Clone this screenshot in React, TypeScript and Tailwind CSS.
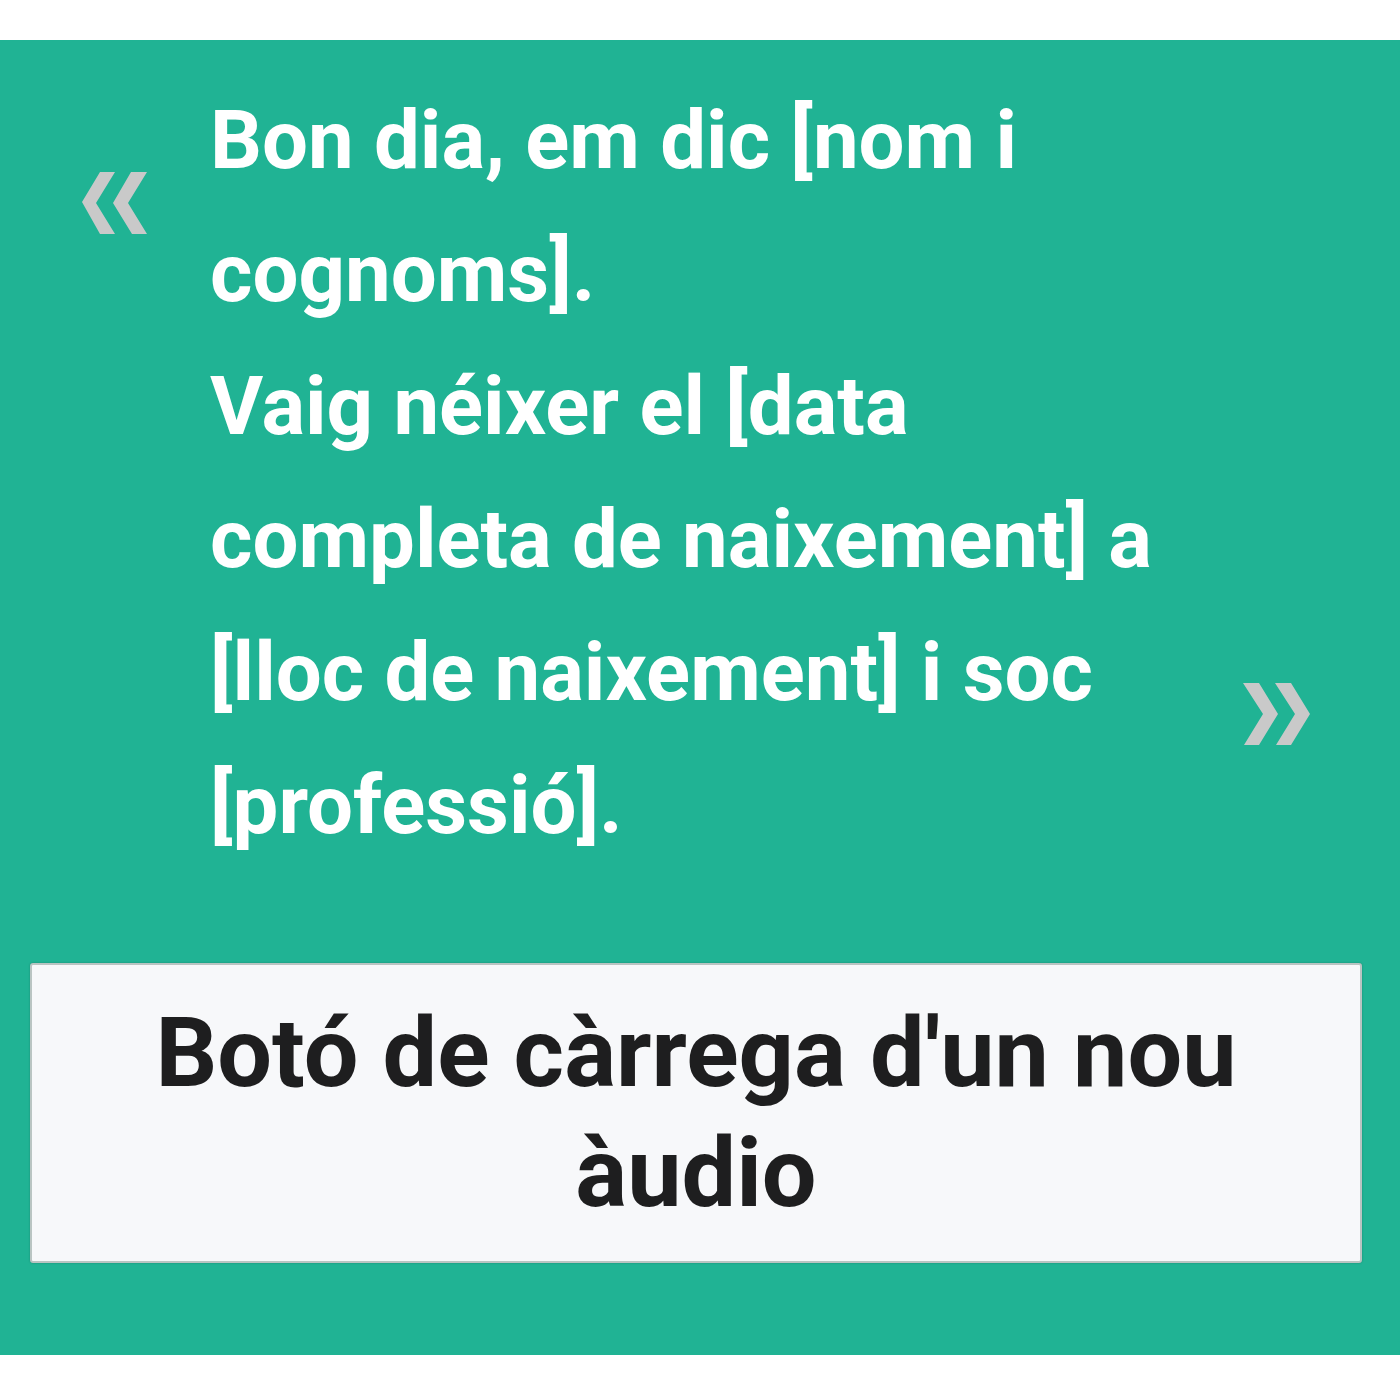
import React from "react";

function LeftQuote() {
  return (
    <svg width="65" height="63" viewBox="0 0 65 63" className="block">
      <polygon points="18,0 33,0 14,31 33,62 18,62 0,30" fill="#c9c9c9" />
      <polygon points="49,0 65,0 46,31 65,62 50,62 31,31" fill="#c9c9c9" />
    </svg>
  );
}

function RightQuote() {
  return (
    <svg width="67" height="62" viewBox="0 0 67 62" className="block">
      <polygon points="0,0 16,0 35,31 16,62 1,62 20,31" fill="#c9c9c9" />
      <polygon points="32,0 48,0 67,31 48,62 33,62 52,31" fill="#c9c9c9" />
    </svg>
  );
}

export default function App() {
  return (
    <div className="w-[1400px] h-[1400px] bg-white pt-[40px]" style={{ fontFamily: "Roboto, 'Liberation Sans', sans-serif" }}>
      <div className="bg-[#20b394] h-[1315px] pt-[34px] flex flex-col">
        <div className="flex">
          <div className="w-[82px] shrink-0" />
          <div className="w-[128px] shrink-0 pt-[98px]">
            <LeftQuote />
          </div>
          <div className="w-[1033px] shrink-0 text-white font-bold text-[81.5px] leading-[133px]">
            Bon dia, em dic [nom i<br />cognoms].<br />Vaig néixer el [data<br />completa de naixement] a<br />[lloc de naixement] i soc<br />[professió].
          </div>
          <div className="flex flex-col justify-end pb-[127px]">
            <RightQuote />
          </div>
        </div>
        <div className="mt-[91px] ml-[30px] mr-[38px] h-[300px] bg-[#f7f8fa] border-2 border-[#b9c4c2] rounded-[3px] shadow-[0_0_2px_rgba(0,0,0,0.25)] flex items-center justify-center text-center text-[#1e1e1f] font-bold text-[97px] leading-[120px]">
          <div>
            Botó de càrrega d'un nou<br />àudio
          </div>
        </div>
      </div>
    </div>
  );
}
